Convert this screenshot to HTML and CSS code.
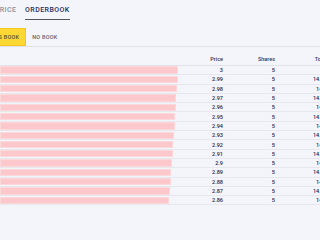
FILE: index.html
```html
<!DOCTYPE html>
<html>
<head>
<meta charset="utf-8">
<link rel="stylesheet" href="styles.css">
</head>
<body>
<div class="page">
  <div class="tabs">
    <div class="tab">PRICE</div>
    <div class="tab active">ORDERBOOK</div>
  </div>
  <div class="toggles">
    <div class="btn on">YES BOOK</div>
    <div class="btn">NO BOOK</div>
  </div>
  <div class="book">
    <div class="row head"><span class="depth"></span><span class="num">Price</span><span class="num">Shares</span><span class="num">Total</span></div>
    <div class="row"><span class="depth"><i class="bar" style="width:178.3px"></i></span><span class="num">3</span><span class="num">5</span><span class="num">15</span></div>
    <div class="row"><span class="depth"><i class="bar" style="width:177.7px"></i></span><span class="num">2.99</span><span class="num">5</span><span class="num">14.95</span></div>
    <div class="row"><span class="depth"><i class="bar" style="width:177px"></i></span><span class="num">2.98</span><span class="num">5</span><span class="num">14.9</span></div>
    <div class="row"><span class="depth"><i class="bar" style="width:176.4px"></i></span><span class="num">2.97</span><span class="num">5</span><span class="num">14.85</span></div>
    <div class="row"><span class="depth"><i class="bar" style="width:175.8px"></i></span><span class="num">2.96</span><span class="num">5</span><span class="num">14.8</span></div>
    <div class="row"><span class="depth"><i class="bar" style="width:175.2px"></i></span><span class="num">2.95</span><span class="num">5</span><span class="num">14.75</span></div>
    <div class="row"><span class="depth"><i class="bar" style="width:174.6px"></i></span><span class="num">2.94</span><span class="num">5</span><span class="num">14.7</span></div>
    <div class="row"><span class="depth"><i class="bar" style="width:174px"></i></span><span class="num">2.93</span><span class="num">5</span><span class="num">14.65</span></div>
    <div class="row"><span class="depth"><i class="bar" style="width:173.3px"></i></span><span class="num">2.92</span><span class="num">5</span><span class="num">14.6</span></div>
    <div class="row"><span class="depth"><i class="bar" style="width:172.6px"></i></span><span class="num">2.91</span><span class="num">5</span><span class="num">14.55</span></div>
    <div class="row"><span class="depth"><i class="bar" style="width:172px"></i></span><span class="num">2.9</span><span class="num">5</span><span class="num">14.5</span></div>
    <div class="row"><span class="depth"><i class="bar" style="width:171.3px"></i></span><span class="num">2.89</span><span class="num">5</span><span class="num">14.45</span></div>
    <div class="row"><span class="depth"><i class="bar" style="width:170.6px"></i></span><span class="num">2.88</span><span class="num">5</span><span class="num">14.4</span></div>
    <div class="row"><span class="depth"><i class="bar" style="width:170px"></i></span><span class="num">2.87</span><span class="num">5</span><span class="num">14.35</span></div>
    <div class="row"><span class="depth"><i class="bar" style="width:169.3px"></i></span><span class="num">2.86</span><span class="num">5</span><span class="num">14.3</span></div>
  </div>
</div>
</body>
</html>
```

FILE: styles.css
```css
html, body {
  margin: 0;
  padding: 0;
  background: #f4f5fa;
  overflow: hidden;
}
.page {
  width: 340px;
  font-family: Roboto, "Liberation Sans", Arial, sans-serif;
  color: #1f2b50;
}
.tabs {
  display: flex;
  gap: 8.6px;
  margin-left: -5.2px;
}
.tab {
  font-size: 7px;
  line-height: 8px;
  padding: 5.6px 0 5.4px;
  border-bottom: 1.5px solid transparent;
  color: #8b909c;
  font-weight: 500;
  letter-spacing: 0.45px;
}
.tab.active {
  color: #1f2d5c;
  border-bottom-color: #555;
}
.toggles {
  display: flex;
  margin-top: 8.5px;
  border-bottom: 1px solid #e1e2e8;
  margin-left: -15.5px;
}
.btn {
  font-size: 5.5px;
  font-weight: 500;
  letter-spacing: 0.25px;
  height: 18px;
  line-height: 18px;
  padding: 0 6px;
  color: #5f636e;
  box-sizing: border-box;
}
.btn.on {
  background: #fdd835;
  border: 1px solid #f2c81c;
  line-height: 16px;
  color: #574f38;
}
.book {
  display: flex;
  flex-direction: column;
}
.row {
  display: grid;
  grid-template-columns: 180px 43px 52px 52px;
  height: 9.3px;
  box-sizing: border-box;
  border-bottom: 1px solid #e7e8ee;
  font-size: 5.5px;
  font-weight: 500;
  align-items: center;
}
.row.head {
  height: 18.5px;
  align-items: end;
  padding-bottom: 2.5px;
  border-bottom: 1px solid #e2e3e9;
  color: #2e3a60;
}
.num {
  text-align: right;
  line-height: 6px;
}
.depth {
  display: flex;
  align-items: center;
  height: 100%;
}
.bar {
  display: block;
  height: 7.3px;
  box-sizing: border-box;
  background: #fcc8cb;
  border: 0.7px solid #fbd8da;
}
```
